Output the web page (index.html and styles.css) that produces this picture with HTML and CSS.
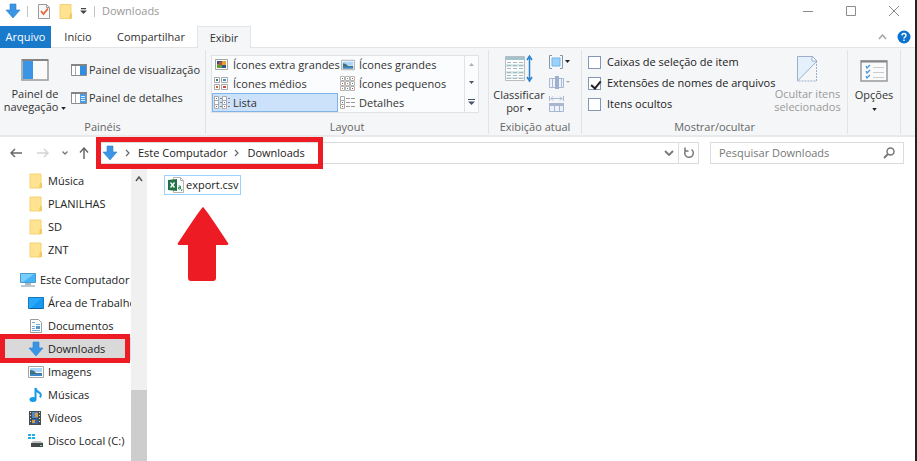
FILE: index.html
```html
<!DOCTYPE html>
<html lang="pt-BR">
<head>
<meta charset="utf-8">
<meta name="viewport" content="width=device-width, initial-scale=1">
<title>Downloads</title>
<link rel="stylesheet" href="styles.css">
</head>
<body>
<svg class="defs" aria-hidden="true">
  <defs>
    <symbol id="down" viewBox="0 0 16 16"><path d="M5 1h6v6h4L8 15 1 7h4z" fill="#3a96e4" stroke="#2b7fd0" stroke-width=".6"/></symbol>
    <symbol id="folder" viewBox="0 0 14 16"><path d="M1 1h11v9h1v5H1z" fill="#ffe391"/><path d="M1 1h11v14H1z" fill="none" stroke="#f5d272"/><path d="M11 10h2v5h-3z" fill="#f3cb60"/></symbol>
    <symbol id="caret" viewBox="0 0 6 4"><path d="M0 0h6L3 4z" fill="currentColor"/></symbol>
    <symbol id="chev" viewBox="0 0 6 8"><path d="M1 1l3 3-3 3" fill="none" stroke="#666" stroke-width="1.2"/></symbol>
    <symbol id="photo" viewBox="0 0 16 14"><path d="M.5 1.500h15v11H.5z" fill="#fff" stroke="#a5a5a5"/><path d="M2 3h12v4H2z" fill="#a9d7fb"/><path d="M2 5q4 0 6 3h6v3H2z" fill="#42717f"/><path d="M2 9h12v2H2z" fill="#3c87c7"/></symbol>
  </defs>
</svg>
<div class="window">
  <header class="titlebar">
    <svg class="i16" viewBox="0 0 16 16"><use href="#down"/></svg>
    <span class="bar"></span>
    <button class="plain check" aria-label="Propriedades"><svg width="12" height="16" viewBox="0 0 12 16"><path d="M.5 1.500h8l3 3v11H.5z" fill="#f8f9fb" stroke="#9b9b9b"/><path d="M8.500 1.500v3h3" fill="none" stroke="#9b9b9b"/><path d="M3 8l2.500 3L10 5.500" fill="none" stroke="#e8683a" stroke-width="1.800"/></svg></button>
    <button class="plain" aria-label="Nova pasta"><svg width="14" height="17"><use href="#folder"/></svg></button>
    <button class="plain" aria-label="Personalizar"><svg width="7" height="6" viewBox="0 0 8 7"><path d="M1 0h6v1.500H1zM0 3h8L4 7z" fill="#444"/></svg></button>
    <span class="bar"></span>
    <span class="title">Downloads</span>
    <div class="winbtns">
      <button class="plain" aria-label="Minimizar"><svg width="10" height="10"><path d="M0 5.500h10" stroke="#8c8c8c"/></svg></button>
      <button class="plain" aria-label="Maximizar"><svg width="10" height="10"><path d="M.5.5h9v9h-9z" fill="none" stroke="#8c8c8c"/></svg></button>
      <button class="plain" aria-label="Fechar"><svg width="10" height="10"><path d="M0 0l10 10M10 0L0 10" stroke="#8c8c8c"/></svg></button>
    </div>
  </header>

  <nav class="tabs">
    <a class="tab file" href="#">Arquivo</a>
    <a class="tab home" href="#">Início</a>
    <a class="tab share" href="#">Compartilhar</a>
    <a class="tab active" href="#">Exibir</a>
    <div class="help">
      <button class="plain" aria-label="Recolher"><svg width="9" height="6"><path d="M1 5l3.500-4L8 5" fill="none" stroke="#a5a5a5" stroke-width="1.500"/></svg></button>
      <button class="plain" aria-label="Ajuda"><svg width="14" height="14"><circle cx="7" cy="7" r="6.500" fill="#0a72d0"/><path d="M5 5.500Q5 3.500 7 3.500t2 2Q9 6.500 7 8v.6M7 9.600v1.500" fill="none" stroke="#fff" stroke-width="1.400"/></svg></button>
    </div>
  </nav>

  <section class="ribbon">
    <div class="group panes">
      <div class="tools">
        <button class="plain big"><svg width="28" height="22"><path d="M1 1h26v20H1z" fill="#fafafa" stroke="#999" stroke-width="1.500"/><path d="M1 1h26" stroke="#858585" stroke-width="2"/><path d="M2 2h10v18H2z" fill="#3a96e4"/></svg><span>Painel de<br>navegação <svg class="caret" width="5" height="3"><use href="#caret"/></svg></span></button>
        <div class="stack">
          <button class="plain row"><svg width="16" height="12"><path d="M.5.5h15v11H.5z" fill="#fff" stroke="#8c8c8c"/><path d="M0 1h16" stroke="#858585" stroke-width="2"/><path d="M4.500 2v9" stroke="#aaa"/><path d="M9 2h6v9H9z" fill="#2f8ee0"/></svg>Painel de visualização</button>
          <button class="plain row"><svg width="16" height="12"><path d="M.5.5h15v11H.5z" fill="#fff" stroke="#8c8c8c"/><path d="M0 1h16" stroke="#858585" stroke-width="2"/><path d="M4.500 2v9" stroke="#aaa"/><path d="M9 2h6v9H9z" fill="#4a9de4"/><path d="M10 4.500h4M10 6.500h4M10 8.500h4" stroke="#d5eaff"/></svg>Painel de detalhes</button>
        </div>
      </div>
      <div class="caption">Painéis</div>
    </div>

    <div class="group layout">
      <div class="gallery">
        <div class="options">
          <button class="plain opt"><svg width="16" height="14"><path d="M1.500 1.500h12v10h-12z" fill="#fff" stroke="#a5a5a5"/><path d="M3 3h9v7H3z" fill="#35548a"/><path d="M3 6h5v4H3z" fill="#5f9d3a"/><path d="M8 3h4v4H8z" fill="#e4a32a"/><path d="M5 4h3v3H5z" fill="#c84c39"/></svg>Ícones extra grandes</button>
          <button class="plain opt"><svg width="14" height="12"><use href="#photo"/></svg>Ícones grandes</button>
          <button class="plain opt"><svg width="16" height="14"><path d="M.5.500h5v5h-5zM7.500.5h6v5h-6zM.5 7.500h5v5h-5zM7.500 7.500h6v5h-6z" fill="#fff" stroke="#aaa"/><path d="M2 2h2v2H2z" fill="#397d68"/><path d="M9 2h3v2H9z" fill="#4b95d1"/><path d="M2 9h2v2H2z" fill="#ca6434"/><path d="M9 9h3v2H9z" fill="#d0493d"/></svg>Ícones médios</button>
          <button class="plain opt"><svg width="16" height="16"><path d="M.5.500h4v4h-4zM5.500.5h4v4h-4zM10.500.5h4v4h-4zM.5 5.500h4v4h-4zM5.500 5.500h4v4h-4zM10.500 5.500h4v4h-4zM.5 10.500h4v4h-4zM5.500 10.500h4v4h-4zM10.500 10.500h4v4h-4z" fill="#fff" stroke="#b5b5b5"/><path d="M2 2h1v1H2zM12 7h1v1h-1zM7 12h1v1H7z" fill="#448776"/><path d="M12 2h1v1h-1zM2 7h1v1H2zM12 12h1v1h-1z" fill="#d14530"/><path d="M7 2h1v1H7zM7 7h1v1H7zM2 12h1v1H2z" fill="#c2822e"/></svg>Ícones pequenos</button>
          <button class="plain opt selected"><svg width="16" height="14"><path d="M.5.500h4v12h-4zM8.500.5h4v12h-4zM.5 4.500h4M.5 8.500h4M8.500 4.500h4M8.500 8.500h4" fill="#fff" stroke="#aaa"/><path d="M6 2.500h2M6 6.500h2M6 10.500h2M14 2.500h2M14 6.500h2M14 10.500h2" stroke="#888"/><path d="M2 10h1v1H2zM10 10h1v1h-1z" fill="#d84a30"/><path d="M2 2h1v1H2zM10 6h1v1h-1z" fill="#4884c1"/></svg>Lista</button>
          <button class="plain opt"><svg width="16" height="14"><path d="M.5.500h4v12h-4zM.5 4.500h4M.5 8.500h4" fill="#fff" stroke="#aaa"/><path d="M6 2.500h4M11 2.500h4M6 6.500h4M11 6.500h4M6 10.500h4M11 10.500h4" stroke="#999"/><path d="M2 10h1v1H2z" fill="#d84a30"/><path d="M2 6h1v1H2z" fill="#4884c1"/></svg>Detalhes</button>
        </div>
        <div class="spin">
          <button class="plain" aria-label="Acima"><svg width="5" height="3"><path d="M0 3L2.500 0 5 3z" fill="#b0b0b0"/></svg></button>
          <button class="plain" aria-label="Abaixo"><svg width="5" height="3"><path d="M0 0h5L2.500 3z" fill="#4c5665"/></svg></button>
          <button class="plain" aria-label="Mais"><svg width="7" height="6"><path d="M0 0h7v1H0zM0 2.500h7L3.500 6z" fill="#4c5665"/></svg></button>
        </div>
      </div>
      <div class="caption">Layout</div>
    </div>

    <div class="group current">
      <div class="tools">
        <button class="plain big sort"><svg width="28" height="28"><path d="M.5 1.500h19v24H.5z" fill="#fff" stroke="#b8bdc1"/><path d="M1 2h18v3H1z" fill="#a3c1cf"/><path d="M1 9h18v3H1zM1 16h18v3H1zM1 22h18v2H1z" fill="#d8e9ec"/><path d="M2 7.500h16M2 10.500h16M2 13.500h16M2 17.500h16M2 20.500h16M2 23.500h16" stroke="#a9b8be" stroke-dasharray="4 2"/><path d="M24.500 3v21M22 5l2.500-4L27 5M22 22l2.500 4 2.500-4" fill="none" stroke="#2882cf" stroke-width="1.500"/></svg><span>Classificar<br>por <svg class="caret" width="5" height="3"><use href="#caret"/></svg></span></button>
        <div class="mini">
          <button class="plain" aria-label="Agrupar por"><svg width="22" height="14"><path d="M3 .5H.5v13H3M11 .5h2.500v13H11" fill="none" stroke="#8796a4"/><path d="M3 3h8v8H3z" fill="#9bd2fb" stroke="#72b7e9"/><path d="M16 5h5l-2.500 3z" fill="#222"/></svg></button>
          <button class="plain" aria-label="Adicionar colunas"><svg width="22" height="15"><path d="M.5 3.500h14v9H.5zM3.500 3v10M12.500 3v10" fill="#eef2fa" stroke="#aab9d2"/><path d="M6 1h4v13H6z" fill="#9fb0ce"/><path d="M17 6h4l-2 2z" fill="#aaa"/></svg></button>
          <button class="plain" aria-label="Dimensionar colunas"><svg width="22" height="16"><path d="M.5 0v5M14.500 0v5M2 2.500h11M4 .5l-2 2 2 2M11 .5l2 2-2 2" fill="none" stroke="#a8b7cf"/><path d="M0 7h15v3H0z" fill="#a8b7cf"/><path d="M.5 9.500h14v6H.5zM5.500 9v6M10.500 9v6" fill="#edf2fa" stroke="#a8b7cf"/></svg></button>
        </div>
      </div>
      <div class="caption">Exibição atual</div>
    </div>

    <div class="group show">
      <div class="tools">
        <div class="checks">
          <label><input type="checkbox">Caixas de seleção de item</label>
          <label><input type="checkbox" checked>Extensões de nomes de arquivos</label>
          <label><input type="checkbox">Itens ocultos</label>
        </div>
        <button class="plain big hide" disabled><svg width="22" height="28"><path d="M1 1h15l5 5L1 26z" fill="#e5f0fd"/><path d="M1.500 26V1.500H16M1.500 26L21 6" fill="none" stroke="#9caecb"/><path d="M16 1v5h5z" fill="#fff" stroke="#9caecb"/><path d="M20.500 6v20H1" fill="none" stroke="#9caecb" stroke-dasharray="2 1"/></svg><span>Ocultar itens<br>selecionados</span></button>
      </div>
      <div class="caption">Mostrar/ocultar</div>
    </div>

    <div class="group choices">
      <button class="plain big"><svg width="28" height="22"><path d="M1 1h26v20H1z" fill="#fafafa" stroke="#999" stroke-width="1.500"/><path d="M1 1.500h26" stroke="#858585" stroke-width="2"/><path d="M13 7.500h11M13 12.500h11M13 17.500h11" stroke="#ccc"/><path d="M6 6l1 2 3-3M6 11l1 2 3-3M6 16l1 2 3-3" fill="none" stroke="#3d92dc" stroke-width="1.200"/></svg><span>Opções<br><svg class="caret" width="5" height="3"><use href="#caret"/></svg></span></button>
    </div>
  </section>

  <div class="navrow">
    <div class="arrows">
      <button class="plain" aria-label="Voltar"><svg width="12" height="10"><path d="M12 5H1M5 1L1 5l4 4" fill="none" stroke="#686868" stroke-width="1.500"/></svg></button>
      <button class="plain" aria-label="Avançar"><svg width="12" height="10"><path d="M0 5h11M7 1l4 4-4 4" fill="none" stroke="#d4d4d4" stroke-width="1.500"/></svg></button>
      <button class="plain recent" aria-label="Recentes"><svg width="6" height="4"><path d="M.5.5L3 3 5.500.5" fill="none" stroke="#777" stroke-width="1.300"/></svg></button>
      <button class="plain" aria-label="Subir"><svg width="10" height="12"><path d="M5 12V1M1 5.500L5 1l4 4.500" fill="none" stroke="#686868" stroke-width="1.500"/></svg></button>
    </div>
    <div class="address">
      <div class="crumbs">
        <svg class="i16" viewBox="0 0 16 16"><use href="#down"/></svg>
        <svg width="6" height="8"><use href="#chev"/></svg>
        <a href="#">Este Computador</a>
        <svg width="6" height="8"><use href="#chev"/></svg>
        <a href="#">Downloads</a>
      </div>
      <button class="plain drop" aria-label="Histórico"><svg width="10" height="6"><path d="M1 1l4 4 4-4" fill="none" stroke="#777" stroke-width="1.800"/></svg></button>
      <button class="plain refresh" aria-label="Atualizar"><svg width="12" height="12"><path d="M8.500 2.500A4.300 4.300 0 1 1 3 3M2 .5V4h3.500" fill="none" stroke="#777" stroke-width="1.500"/></svg></button>
    </div>
    <div class="search">
      <input type="text" aria-label="Pesquisar Downloads" placeholder="Pesquisar Downloads">
      <svg width="12" height="12"><circle cx="7.500" cy="4.500" r="3.500" fill="none" stroke="#777" stroke-width="1.500"/><path d="M5 7l-4 4" stroke="#777" stroke-width="2"/></svg>
    </div>
  </div>

  <div class="main">
    <aside class="tree">
      <a class="node" href="#"><svg width="14" height="16"><use href="#folder"/></svg>Música</a>
      <a class="node" href="#"><svg width="14" height="16"><use href="#folder"/></svg>PLANILHAS</a>
      <a class="node" href="#"><svg width="14" height="16"><use href="#folder"/></svg>SD</a>
      <a class="node" href="#"><svg width="14" height="16"><use href="#folder"/></svg>ZNT</a>
      <a class="node root" href="#"><svg width="16" height="16"><path d="M.5 1.500h15v9H.5z" fill="#45b3f5" stroke="#4b9bcd"/><path d="M1 2h13L3 10H1z" fill="#7acefd"/><path d="M5 11h6v2H5z" fill="#b1bac0"/><path d="M1 13h14v2H1z" fill="#b9c8d1"/></svg>Este Computador</a>
      <a class="node" href="#"><svg width="16" height="14"><path d="M.5 1.500h15v11H.5z" fill="#1598ef" stroke="#1578bd"/><path d="M1 2h13L3 12H1z" fill="#27a8fb"/><path d="M2 12.500h12" stroke="#0e5e99"/></svg>Área de Trabalho</a>
      <a class="node" href="#"><svg width="14" height="16"><path d="M2.500 1.500h8l3 3v10h-11z" fill="#fff" stroke="#969ca0"/><path d="M4 4.500h3M8 6.500h4M4 8.500h3M4 10.500h3M4 12.500h8" stroke="#73add8"/><path d="M8 8h4v3H8z" fill="#4e9bcc"/></svg>Documentos</a>
      <a class="node current-node" href="#"><svg width="16" height="16"><use href="#down"/></svg>Downloads</a>
      <a class="node" href="#"><svg width="16" height="14"><use href="#photo"/></svg>Imagens</a>
      <a class="node" href="#"><svg width="14" height="16"><ellipse cx="5" cy="12.500" rx="3.500" ry="2.500" fill="#179ce9"/><path d="M7.500 12V1Q8 4 11 5.500t1 5" fill="none" stroke="#179ce9" stroke-width="2"/></svg>Músicas</a>
      <a class="node" href="#"><svg width="14" height="16"><path d="M1 1h12v14H1z" fill="#454c52"/><path d="M4 2h6v6H4z" fill="#4d88c7"/><path d="M4 9h6v5H4z" fill="#3665a4"/><path d="M7 3h3v4H7zM4 10h3v3H4z" fill="#d89b3d"/><path d="M2.500 2v12M11.500 2v12" stroke="#ddd" stroke-dasharray="1 2"/></svg>Vídeos</a>
      <a class="node" href="#"><svg width="16" height="16"><path d="M0 1h3v2H0zM4 1h3v2H4zM0 4h3v2H0zM4 4h3v2H4z" fill="#1bb0ec"/><path d="M5 8h8l2 2H3z" fill="#bec2c5"/><path d="M3 10h12v4H3z" fill="#45494c"/><path d="M12 12h2v1h-2z" fill="#70e06c"/></svg>Disco Local (C:)</a>
    </aside>
    <div class="scroll" aria-hidden="true">
      <svg width="8" height="6"><path d="M1 5l3-4 3 4" fill="none" stroke="#555" stroke-width="1.500"/></svg>
      <div class="thumb"></div>
    </div>
    <main class="files">
      <a class="item" href="#"><svg width="16" height="16"><path d="M5.500.500h7l3 3v12h-10z" fill="#fff" stroke="#b5b5b5"/><path d="M12.500.500v3h3" fill="none" stroke="#b5b5b5"/><path d="M0 3l9-1v12l-9-1z" fill="#217346"/><path d="M2.500 5.500l4 5M6.500 5.500l-4 5" stroke="#fff" stroke-width="1.400"/><path d="M10.500 9h2v3h-2v-1.500h2M14 12l-.5 2" fill="none" stroke="#2c9456"/></svg>export.csv</a>
      <svg class="pointer" width="52" height="74" viewBox="0 0 52 74"><path d="M26 0Q28 1 51 36Q52 38 50 38H39V71Q39 74 36 74H14Q11 74 11 71V38H2Q0 38 1 36Q24 1 26 0z" fill="#ed1c24"/></svg>
    </main>
  </div>
</div>
</body>
</html>
```
FILE: styles.css
```css
* { box-sizing: border-box; }
body {
  margin: 0;
  background: #fff;
  color: #222;
  font: 11px/14px "Open Sans", "Noto Sans", sans-serif;
}
.defs { position: absolute; width: 0; height: 0; }
svg { display: block; flex: none; }
a { color: inherit; text-decoration: none; white-space: nowrap; }
.plain {
  display: flex;
  align-items: center;
  justify-content: center;
  padding: 0;
  border: 0;
  background: none;
  color: #333;
  font: inherit;
  white-space: nowrap;
}
.i16 { width: 16px; height: 16px; }
.window {
  display: flex;
  flex-direction: column;
  height: 100vh;
  border-right: 2px solid #222;
  overflow: hidden;
}

.titlebar { display: flex; align-items: center; height: 22px; margin-bottom: 4px; padding-left: 5px; }
.bar { width: 1px; height: 11px; margin: 0 10px 0 6px; background: #c4c4c4; }
.check { margin-right: 9px; }
.titlebar > .plain + .plain { margin-right: 7px; }
.titlebar > .plain + .bar { margin: 0 7px 0 0; }
.title { color: #999; }
.winbtns { display: flex; gap: 33px; margin-left: auto; padding-right: 16px; }

.tabs { display: flex; height: 22px; flex: none; border-bottom: 1px solid #e2e4e6; }
.tab { display: flex; align-items: center; justify-content: center; color: #333; }
.file { width: 51px; margin-bottom: -1px; background: #1979ca; color: #fff; }
.home { width: 54px; }
.share { width: 92px; }
.active { width: 54px; margin-bottom: -1px; border: 1px solid #e2e4e6; border-bottom: 0; background: #f5f6f7; }
.help { display: flex; align-items: center; gap: 10px; margin-left: auto; padding: 0 4px 0 0; }

.ribbon { display: flex; flex: none; height: 89px; border-bottom: 2px solid #e8e9ea; background: #f5f6f7; }
.group { display: flex; flex-direction: column; margin: 2px 0 1px; padding-top: 5px; border-right: 1px solid #e2e3e4; }
.panes { width: 206px; }
.layout { width: 283px; }
.current { width: 93px; }
.show { width: 266px; }
.choices { width: 53px; }
.caption { margin-top: auto; color: #666; text-align: center; }
.tools { display: flex; }
.big { flex-direction: column; gap: 6px; line-height: 13px; }
.panes .big { width: 64px; margin: 4px 4px 0 3px; }
.choices .big { margin-top: 5px; }
.caret { display: inline-block; vertical-align: middle; color: #222; }
.stack { display: flex; flex-direction: column; gap: 14px; padding-top: 8px; }
.row { gap: 2px; justify-content: flex-start; }
.gallery { display: flex; height: 58px; margin: 0 9px 0 5px; border: 1px solid #e0e2e5; background: #fbfcfd; }
.options { display: grid; flex: 1; grid-template: repeat(3, 1fr) / 126px 1fr; }
.opt { gap: 3px; justify-content: flex-start; padding-left: 1px; border: 1px solid transparent; }
.opt svg { width: 16px; }
.selected { border-color: #7eb4ea; background: #cce1fa; }
.spin { display: grid; width: 14px; border-left: 1px solid #e0e2e5; }
.sort { width: 60px; gap: 5px; }
.mini { display: flex; flex-direction: column; gap: 6px; }
.checks { display: flex; flex-direction: column; gap: 7px; padding-left: 6px; }
.checks label { display: flex; align-items: center; gap: 6px; white-space: nowrap; }
.checks input {
  position: relative;
  appearance: none;
  width: 13px;
  height: 13px;
  margin: 0;
  border: 1px solid #8497b5;
  background: #fff;
}
.checks input:checked::after {
  content: "";
  position: absolute;
  left: 4px;
  top: 1px;
  width: 4px;
  height: 8px;
  border: solid #222;
  border-width: 0 2px 2px 0;
  transform: rotate(40deg);
}
.hide { width: 66px; margin-left: -1px; gap: 4px; color: #999; }

.navrow { display: flex; align-items: center; flex: none; height: 31px; padding-right: 11px; }
.arrows { display: flex; align-items: center; gap: 15px; width: 98px; padding-left: 10px; }
.recent { margin: 0 -4px 0 -2px; }
.address { display: flex; flex: 1; height: 22px; margin-right: 11px; border: 1px solid #dcdcdc; }
.crumbs { position: relative; display: flex; align-items: center; gap: 7px; width: 220px; margin-right: auto; padding-left: 3px; }
.crumbs::after { content: ""; position: absolute; inset: -6px -4px -6px -3px; border: 5px solid #ed1c24; }
.drop { width: 18px; }
.refresh { width: 20px; border-left: 1px solid #dcdcdc; }
.search { display: flex; align-items: center; width: 194px; height: 22px; padding: 0 8px; border: 1px solid #dcdcdc; }
.search input { flex: 1; min-width: 0; padding: 0; border: 0; background: none; color: #333; font: inherit; }
.search input::placeholder { color: #777; opacity: 1; }

.main { display: flex; flex: 1; min-height: 0; }
.tree { width: 131px; padding-top: 1px; overflow: hidden; }
.node { display: flex; align-items: center; gap: 4px; height: 23px; padding-left: 28px; }
.node svg { width: 16px; }
.root { margin-top: 7px; padding-left: 20px; }
.current-node { position: relative; background: #d9d9d9; }
.current-node::after { content: ""; position: absolute; inset: -3px 1px -3px 0; border: 5px solid #ed1c24; }
.scroll { display: flex; flex-direction: column; align-items: center; width: 16px; padding-top: 8px; background: #f0f0f0; }
.thumb { width: 100%; height: 71px; margin-top: auto; background: #cdcdcd; }
.files { padding: 7px 0 0 17px; }
.item { display: flex; align-items: center; gap: 2px; height: 20px; padding: 0 1px 0 3px; border: 1px solid #99d1ff; }
.pointer { margin: 12px 0 0 13px; }
```
